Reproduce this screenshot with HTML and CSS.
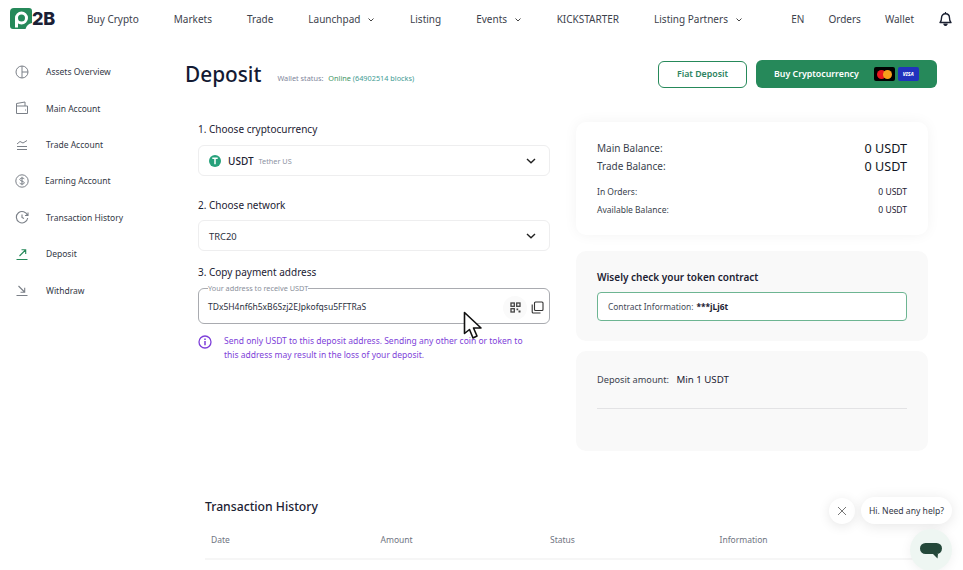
FILE: index.html
```html
<!DOCTYPE html>
<html lang="en">
<head>
<meta charset="utf-8">
<title>Deposit</title>
<link rel="stylesheet" href="styles.css">
</head>
<body>
<header class="topbar">
  <a class="logo" href="#">
    <svg class="logo-mark" width="23" height="22" viewBox="0 0 23 22">
      <path d="M4 0H19Q22 0 22 3V15Q17 16 15.500 21H3Q0 21 0 18V4Q0 0 4 0Z" fill="#26895a"/>
      <circle cx="11.500" cy="10" r="5" fill="none" stroke="#fff" stroke-width="3"/>
      <path d="M6.500 10V19.500" stroke="#fff" stroke-width="3" fill="none"/>
    </svg>
    <span class="logo-text">2B</span>
  </a>
  <nav class="nav-main">
    <a href="#">Buy Crypto</a>
    <a href="#">Markets</a>
    <a href="#">Trade</a>
    <a href="#" class="has-menu">Launchpad <svg class="caret" width="6" height="4" viewBox="0 0 6 4"><path d="M.5.500 3 3 5.500.500" fill="none" stroke="#444" stroke-width="1"/></svg></a>
    <a href="#">Listing</a>
    <a href="#" class="has-menu">Events <svg class="caret" width="6" height="4" viewBox="0 0 6 4"><path d="M.5.500 3 3 5.500.500" fill="none" stroke="#444" stroke-width="1"/></svg></a>
    <a href="#">KICKSTARTER</a>
    <a href="#" class="has-menu">Listing Partners <svg class="caret" width="6" height="4" viewBox="0 0 6 4"><path d="M.5.500 3 3 5.500.500" fill="none" stroke="#444" stroke-width="1"/></svg></a>
  </nav>
  <nav class="nav-user">
    <a href="#">EN</a>
    <a href="#">Orders</a>
    <a href="#">Wallet</a>
    <svg class="bell" width="13" height="14" viewBox="0 0 13 14"><path d="M1 10.500C2.300 9.500 2.500 8 2.500 6 2.500 3.500 4 1.800 6.500 1.800S10.500 3.500 10.500 6C10.500 8 10.700 9.500 12 10.500Z" fill="none" stroke="#1c2233" stroke-width="1.400" stroke-linejoin="round"/><path d="M6.500 0V2M5 12H8V12.500Q6.500 14.500 5 12.500Z" stroke="#1c2233" stroke-width="1.200" fill="#1c2233"/></svg>
  </nav>
</header>

<div class="page">
  <aside class="sidebar">
    <a class="side-item" href="#">
      <svg width="16" height="16" viewBox="0 0 16 16" fill="none" stroke="#7b8088" stroke-width="1"><circle cx="8" cy="8" r="6"/><path d="M8 2V14M8 8H14"/></svg>
      <span>Assets Overview</span>
    </a>
    <a class="side-item" href="#">
      <svg width="16" height="16" viewBox="0 0 16 16" fill="none" stroke="#7b8088" stroke-width="1"><path d="M2.500 5V13.500H13.500V6H2.500V3.500L11 2V6"/><path d="M11 10H12" stroke-width="1"/></svg>
      <span>Main Account</span>
    </a>
    <a class="side-item" href="#">
      <svg width="16" height="16" viewBox="0 0 16 16" fill="none" stroke="#7b8088" stroke-width="1"><path d="M3 7 6 4.500 9 6 13 3.500M3 9.500H13M3 12.500H13"/></svg>
      <span>Trade Account</span>
    </a>
    <a class="side-item item-earning" href="#">
      <svg width="16" height="16" viewBox="0 0 16 16" fill="none" stroke="#7b8088" stroke-width="1"><circle cx="8" cy="8" r="6.200"/><path d="M10.300 5.800C9.500 4.800 5.800 4.700 5.800 6.500S10.300 8 10.300 9.800 6.500 11.200 5.700 10.200M8 3.800V12.200"/></svg>
      <span>Earning Account</span>
    </a>
    <a class="side-item" href="#">
      <svg width="16" height="16" viewBox="0 0 16 16" fill="none" stroke="#7b8088" stroke-width="1.100"><path d="M13.500 6.500A5.700 5.700 0 1 0 13.700 9M14 3.500V6.500H11M8 5.500V8.500L10 9.500"/></svg>
      <span>Transaction History</span>
    </a>
    <a class="side-item" href="#">
      <svg width="16" height="16" viewBox="0 0 16 16" fill="none" stroke="#26895a" stroke-width="1.100"><path d="M2.500 13.500H13.500M5.500 10 11.500 4M7.500 3.800H11.700V8"/></svg>
      <span>Deposit</span>
    </a>
    <a class="side-item" href="#">
      <svg width="16" height="16" viewBox="0 0 16 16" fill="none" stroke="#7b8088" stroke-width="1.100"><path d="M2.500 13.500H13.500M4.500 4 10.500 10M10.700 5.800V10.200H6.500"/></svg>
      <span>Withdraw</span>
    </a>
  </aside>

  <main class="content">
    <div class="title-row">
      <h1>Deposit</h1>
      <p class="wallet-status">Wallet status: <span class="online">Online</span> <span class="blocks">(64902514 blocks)</span></p>
      <div class="actions">
        <a class="btn btn-outline" href="#">Fiat Deposit</a>
        <a class="btn btn-solid" href="#">
          <span>Buy Cryptocurrency</span>
          <span class="pay-badges">
            <span class="pay-card pay-mc"><i class="mc-red"></i><i class="mc-orange"></i></span>
            <span class="pay-card pay-visa">VISA</span>
          </span>
        </a>
      </div>
    </div>

    <div class="deposit-grid">
      <section class="form-col">
        <h2 class="step">1. Choose cryptocurrency</h2>
        <div class="select">
          <svg class="coin" width="12" height="12" viewBox="0 0 12 12"><circle cx="6" cy="6" r="6" fill="#26a17b"/><path d="M3.300 3.200H8.700M6 3.200V9.300" stroke="#fff" stroke-width="1.500"/></svg>
          <b class="coin-code">USDT</b>
          <span class="coin-name">Tether US</span>
          <svg class="chevron" width="10" height="6" viewBox="0 0 10 6"><path d="M1 1 5 4.800 9 1" fill="none" stroke="#222" stroke-width="1.400"/></svg>
        </div>
        <h2 class="step step-2">2. Choose network</h2>
        <div class="select">
          <span class="network">TRC20</span>
          <svg class="chevron" width="10" height="6" viewBox="0 0 10 6"><path d="M1 1 5 4.800 9 1" fill="none" stroke="#222" stroke-width="1.400"/></svg>
        </div>
        <h2 class="step step-3">3. Copy payment address</h2>
        <fieldset class="address">
          <legend>Your address to receive USDT</legend>
          <span class="address-value">TDx5H4nf6h5xB6Szj2EJpkofqsu5FFTRaS</span>
          <span class="qr-btn">
            <svg width="11" height="11" viewBox="0 0 11 11" fill="none" stroke="#444" stroke-width="1.300"><rect x="1" y="1" width="3.300" height="3.300"/><rect x="6.700" y="1" width="3.300" height="3.300"/><rect x="1" y="6.700" width="3.300" height="3.300"/><path d="M6.500 6.500H8.200V8.200H6.500ZM8.500 8.500H10.500V10.500H8.500Z" fill="#444" stroke="none"/></svg>
          </span>
          <svg class="copy-btn" width="13" height="13" viewBox="0 0 13 13" fill="none" stroke="#333" stroke-width="1.100"><rect x="3.500" y="1" width="8.500" height="8.500" rx="1"/><path d="M1.200 3.500V11A1 1 0 0 0 2.200 12H9.500"/></svg>
        </fieldset>
        <div class="notice">
          <svg width="14" height="14" viewBox="0 0 14 14" fill="none" stroke="#7e3fd9" stroke-width="1.300"><circle cx="7" cy="7" r="6"/><path d="M7 6V10.300M7 3.500V5" stroke-width="1.500"/></svg>
          <p>Send only USDT to this deposit address. Sending any other coin or token to this address may result in the loss of your deposit.</p>
        </div>
      </section>

      <section class="info-col">
        <div class="card card-balance">
          <div class="bal-row bal-main"><span>Main Balance:</span><b>0 USDT</b></div>
          <div class="bal-row bal-main"><span>Trade Balance:</span><b>0 USDT</b></div>
          <div class="bal-row bal-sub bal-first"><span>In Orders:</span><b>0 USDT</b></div>
          <div class="bal-row bal-sub"><span>Available Balance:</span><b>0 USDT</b></div>
        </div>
        <div class="card card-contract">
          <h3>Wisely check your token contract</h3>
          <div class="contract-box">Contract Information: <b>***jLj6t</b></div>
        </div>
        <div class="card card-amount">
          <p class="amount-line">Deposit amount: <span>Min 1 USDT</span></p>
          <hr>
        </div>
      </section>
    </div>

    <section class="history">
      <h2>Transaction History</h2>
      <div class="history-head">
        <span>Date</span><span>Amount</span><span>Status</span><span>Information</span>
      </div>
    </section>
  </main>
</div>

<!-- pointer resting on the address field -->
<svg class="pointer" width="20" height="29" viewBox="0 0 20 29"><path d="M1.500 1.500V22.500L6.500 18.500 10 27 14 25 10.500 17H18Z" fill="#fff" stroke="#111" stroke-width="1.600" stroke-linejoin="round"/></svg>

<!-- support chat launcher -->
<aside class="chat">
  <button class="chat-close" type="button"><svg width="10" height="10" viewBox="0 0 10 10"><path d="M1 1 9 9M9 1 1 9" stroke="#777" stroke-width="1"/></svg></button>
  <div class="chat-bubble">Hi. Need any help?</div>
  <div class="chat-launcher"><svg width="24" height="16" viewBox="0 0 24 16"><rect x="1" y="0" width="22" height="11" rx="5.500" fill="#24483a"/><path d="M14 11H19L18.500 15.500Z" fill="#24483a"/></svg></div>
</aside>
</body>
</html>
```

FILE: styles.css
```css
* { box-sizing: border-box; }

html, body {
  margin: 0;
  height: 570px;
  overflow: hidden;
  background: #fff;
  font-family: "Noto Sans", sans-serif;
  color: #1c2233;
}

a { color: inherit; text-decoration: none; }
h1, h2, h3, p { margin: 0; }

/* Top navigation */
.topbar {
  height: 37px;
  display: flex;
  align-items: center;
  padding: 0 11px 0 10px;
  font-size: 10px;
  color: #3d424d;
}
.logo { display: flex; align-items: center; width: 77px; }
.logo-mark { display: block; margin-right: -1px; }
.logo-text {
  font-family: Inter, sans-serif;
  font-weight: 800;
  font-size: 18px;
  letter-spacing: -.3px;
  color: #1b2035;
}
.nav-main { display: flex; gap: 35px; align-items: center; }
.has-menu { margin-right: 1px; }
.caret { margin-left: 5px; vertical-align: 1px; }
.nav-user { display: flex; align-items: center; margin-left: auto; gap: 24px; }
.bell { margin-left: 1px; }

/* Page frame */
.page { display: flex; }

.sidebar {
  width: 185px;
  padding-top: 16.600px;
  flex: none;
}
.side-item {
  height: 36.4px;
  display: flex;
  align-items: center;
  gap: 16px;
  padding-left: 14px;
  font-size: 8.500px;
  color: #333846;
}
.item-earning { gap: 15px; }

.content { flex: 1; min-width: 0; padding-right: 26px; }

.title-row {
  display: flex;
  align-items: center;
  height: 28px;
  margin-top: 23px;
}
.title-row h1 { font-size: 20.800px; font-weight: 500; line-height: 28px; color: #131a33; }
.wallet-status {
  margin-left: 16px;
  padding-top: 8px;
  font-size: 7.300px;
  color: #80859a;
}
.online { color: #3e9463; margin-left: 3px; }
.blocks { color: #3f9c94; }
.actions { margin-left: auto; display: flex; align-items: center; gap: 9px; }
.btn {
  display: flex;
  align-items: center;
  justify-content: center;
  font-size: 8.800px;
  font-weight: 600;
  border-radius: 6px;
}
.btn-outline {
  width: 89px;
  height: 27px;
  border: 1.500px solid #26895a;
  color: #2c8360;
}
.btn-solid {
  width: 181px;
  height: 28px;
  background: #26895a;
  color: #fff;
  justify-content: flex-start;
  padding-left: 18px;
}
.pay-badges { display: flex; gap: 3px; margin-left: 15px; }
.pay-card {
  width: 21px;
  height: 14px;
  border-radius: 2px;
  display: flex;
  align-items: center;
  justify-content: center;
  font-size: 5px;
  font-weight: 800;
}
.pay-mc { background: #000; }
.pay-visa { background: #2132bd; color: #fff; font-style: italic; }
.mc-red, .mc-orange { width: 9px; height: 9px; border-radius: 50%; display: block; }
.mc-red { background: #e9161d; }
.mc-orange { background: #f79e1b; margin-left: -3px; }

/* Deposit form and side cards */
.deposit-grid {
  margin: 34px 0 0 13px;
  width: 730px;
  display: grid;
  grid-template-columns: 352px 352px;
  gap: 26px;
}
.step { font-size: 10px; line-height: 14px; font-weight: 400; color: #1c2233; margin-bottom: 9px; }
.step-2 { margin-top: 22px; margin-bottom: 8px; }
.step-3 { margin-top: 14px; margin-bottom: 3px; }
.select {
  height: 31px;
  border: 1px solid #eeeeef;
  border-radius: 6px;
  display: flex;
  align-items: center;
  padding: 0 13px 0 10px;
}
.coin { margin-right: 7px; }
.coin-code { font-size: 10px; font-weight: 500; }
.coin-name { font-size: 7.300px; color: #8d93a3; margin-left: 5px; }
.network { font-size: 9.400px; color: #2b3040; padding-top: 2px; }
.chevron { margin-left: auto; }

.address {
  position: relative;
  margin: 0;
  height: 42px;
  padding: 0 5px 0 9px;
  border: 1px solid #a9abb0;
  border-radius: 6px;
  display: flex;
  align-items: center;
}
.address legend {
  padding: 0;
  margin-left: 0;
  font-size: 7.300px;
  line-height: 12px;
  color: #8a8f9b;
}
.address-value { font-size: 8.500px; color: #2b3040; padding-bottom: 4px; }
.qr-btn {
  margin-left: auto;
  width: 24px;
  height: 24px;
  margin-bottom: 2px;
  border-radius: 50%;
  background: #fafafa;
  display: flex;
  align-items: center;
  justify-content: center;
}
.copy-btn { margin-left: 4px; margin-bottom: 2px; }

.notice { display: flex; gap: 12px; margin-top: 10px; }
.notice svg { flex: none; margin-top: 1px; }
.notice p {
  font-size: 8.500px;
  line-height: 14px;
  width: 306px;
  color: #7e3fd9;
}

.info-col { display: flex; flex-direction: column; }
.card { border-radius: 10px; padding: 0 21px; }
.card-balance {
  height: 113px;
  padding-top: 17px;
  background: #fff;
  box-shadow: 0 0 14px rgba(0, 0, 0, .05);
}
.bal-row { display: flex; justify-content: space-between; align-items: center; }
.bal-main { height: 18px; font-size: 10px; color: #3a3f4d; }
.bal-main b { font-size: 12.600px; font-weight: 400; color: #111522; }
.bal-sub { height: 18.5px; font-size: 8.500px; color: #3a3f4d; }
.bal-sub b { font-weight: 400; color: #1c2233; }
.bal-first { margin-top: 7px; }

.card-contract {
  height: 90px;
  margin-top: 16px;
  padding-top: 19px;
  background: #f9f9f9;
}
.card-contract h3 { font-size: 10px; line-height: 14px; font-weight: 600; color: #1c2233; }
.contract-box {
  margin-top: 8px;
  height: 29px;
  padding-left: 10px;
  display: flex;
  align-items: center;
  gap: 3px;
  background: #fff;
  border: 1px solid #6db592;
  border-radius: 4px;
  font-size: 8.400px;
  color: #454a58;
}
.contract-box b { font-weight: 700; color: #1c2233; }

.card-amount {
  height: 100px;
  margin-top: 10px;
  padding-top: 22px;
  background: #f9f9f9;
}
.amount-line { font-size: 9.200px; line-height: 14px; color: #3a3f4d; }
.amount-line span { margin-left: 5px; font-size: 9.700px; font-weight: 400; color: #1c2233; }
.card-amount hr { margin: 21px 0 0; border: 0; border-top: 1px solid #e3e3e5; }

/* History table head */
.history { margin: 47px 0 0 20px; }
.history h2 { font-size: 12.200px; line-height: 18px; font-weight: 500; color: #1c2233; }
.history-head {
  margin-top: 4px;
  height: 40px;
  display: grid;
  grid-template-columns: repeat(4, 169.500px);
  align-items: center;
  padding: 0 0 0 6px;
  border-bottom: 2px solid #f6f6f6;
  font-size: 8.500px;
  color: #6f7482;
}

/* Overlays */
.pointer { position: absolute; left: 463px; top: 311px; }

.chat { position: absolute; inset: 0; pointer-events: none; }
.chat-close {
  position: absolute;
  left: 829px;
  top: 498px;
  width: 26px;
  height: 26px;
  padding: 0;
  border: 0;
  border-radius: 50%;
  background: #fff;
  box-shadow: 0 2px 12px rgba(0, 0, 0, .1);
  display: flex;
  align-items: center;
  justify-content: center;
}
.chat-bubble {
  position: absolute;
  left: 861px;
  top: 497px;
  width: 91px;
  height: 27px;
  border-radius: 14px;
  background: #fff;
  box-shadow: 0 2px 14px rgba(0, 0, 0, .1);
  display: flex;
  align-items: center;
  justify-content: center;
  font-size: 8.600px;
  color: #333846;
}
.chat-launcher {
  position: absolute;
  left: 910px;
  top: 529px;
  width: 42px;
  height: 42px;
  border-radius: 50%;
  background: #eef6f2;
  box-shadow: 0 2px 12px rgba(0, 0, 0, .06);
  display: flex;
  align-items: center;
  justify-content: center;
  padding-top: 2px;
}
```
